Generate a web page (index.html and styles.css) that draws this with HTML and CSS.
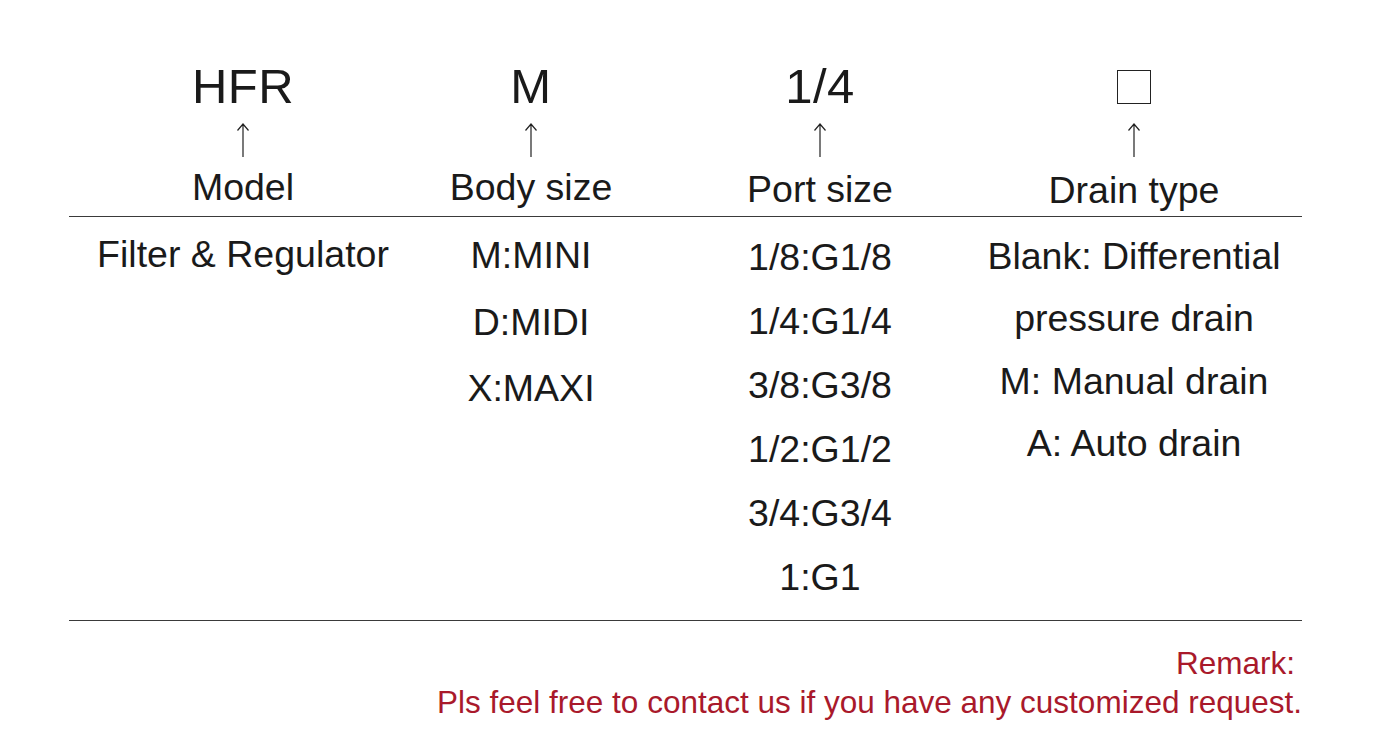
FILE: index.html
```html
<!DOCTYPE html>
<html lang="en">
<head>
<meta charset="utf-8">
<title>HFR Ordering Code</title>
<link rel="stylesheet" href="styles.css">
</head>
<body>
<div class="sheet">
  <div class="grid head">
    <div class="hcol">
      <div class="code">HFR</div>
      <svg class="arrow" width="14" height="34" viewBox="0 0 14 34"><path d="M7 1 V34 M1.5 7.5 L7 1 L12.5 7.5" fill="none" stroke="#222" stroke-width="1.2"/></svg>
      <div class="label">Model</div>
    </div>
    <div class="hcol">
      <div class="code">M</div>
      <svg class="arrow" width="14" height="34" viewBox="0 0 14 34"><path d="M7 1 V34 M1.5 7.5 L7 1 L12.5 7.5" fill="none" stroke="#222" stroke-width="1.2"/></svg>
      <div class="label">Body size</div>
    </div>
    <div class="hcol">
      <div class="code">1/4</div>
      <svg class="arrow" width="14" height="34" viewBox="0 0 14 34"><path d="M7 1 V34 M1.5 7.5 L7 1 L12.5 7.5" fill="none" stroke="#222" stroke-width="1.2"/></svg>
      <div class="label low">Port size</div>
    </div>
    <div class="hcol">
      <div class="code"><span class="box"></span></div>
      <svg class="arrow" width="14" height="34" viewBox="0 0 14 34"><path d="M7 1 V34 M1.5 7.5 L7 1 L12.5 7.5" fill="none" stroke="#222" stroke-width="1.2"/></svg>
      <div class="label lower">Drain type</div>
    </div>
  </div>
  <div class="rule"></div>
  <div class="grid body">
    <div class="col model">
      <div>Filter &amp; Regulator</div>
    </div>
    <div class="col size">
      <div>M:MINI</div>
      <div>D:MIDI</div>
      <div>X:MAXI</div>
    </div>
    <div class="col port">
      <div>1/8:G1/8</div>
      <div>1/4:G1/4</div>
      <div>3/8:G3/8</div>
      <div>1/2:G1/2</div>
      <div>3/4:G3/4</div>
      <div>1:G1</div>
    </div>
    <div class="col drain">
      <div>Blank: Differential</div>
      <div>pressure drain</div>
      <div>M: Manual drain</div>
      <div>A: Auto drain</div>
    </div>
  </div>
  <div class="rule"></div>
  <div class="remark">
    <div class="r1">Remark:</div>
    <div class="r2">Pls feel free to contact us if you have any customized request.</div>
  </div>
</div>
</body>
</html>
```

FILE: styles.css
```css
html, body {
  margin: 0;
  padding: 0;
  background: #ffffff;
}
body {
  font-family: "Liberation Sans", Arial, sans-serif;
  color: #1a1a1a;
}
.sheet {
  width: 1233px;
  margin-left: 69px;
  padding-top: 58px;
}
.grid {
  display: grid;
  grid-template-columns: 348px 228px 350px 278px;
  justify-items: center;
}
.hcol {
  display: flex;
  flex-direction: column;
  align-items: center;
  white-space: nowrap;
}
.code {
  font-size: 49px;
  line-height: 56px;
  height: 56px;
  letter-spacing: 0.5px;
  display: flex;
  align-items: center;
}
.box {
  display: block;
  width: 32px;
  height: 32px;
  border: 1.5px solid #222;
  margin-top: 2px;
}
.arrow {
  display: block;
  margin-top: 9px;
}
.label {
  font-size: 37.5px;
  line-height: 44px;
  margin-top: 8px;
}
.label.low { margin-top: 10px; margin-bottom: -2px; }
.label.lower { margin-top: 11px; margin-bottom: -3px; }
.rule {
  height: 1px;
  background: #3a3a3a;
  margin-top: 7px;
}
.body {
  margin-top: 8px;
  padding-bottom: 11px;
}
.col {
  display: flex;
  flex-direction: column;
  align-items: center;
  font-size: 37.5px;
  white-space: nowrap;
}
.col > div { line-height: 64px; }
.model { margin-top: -3px; }
.size > div { line-height: 66.5px; }
.size { margin-top: -3px; }
.drain > div { line-height: 62.3px; }
.body + .rule { margin-top: 0; }
.remark {
  display: flex;
  flex-direction: column;
  align-items: flex-end;
  color: #a9192b;
  font-size: 31.5px;
  margin-top: 23px;
}
.r1 { line-height: 39px; margin-right: 7px; }
.r2 { line-height: 39px; }
```
